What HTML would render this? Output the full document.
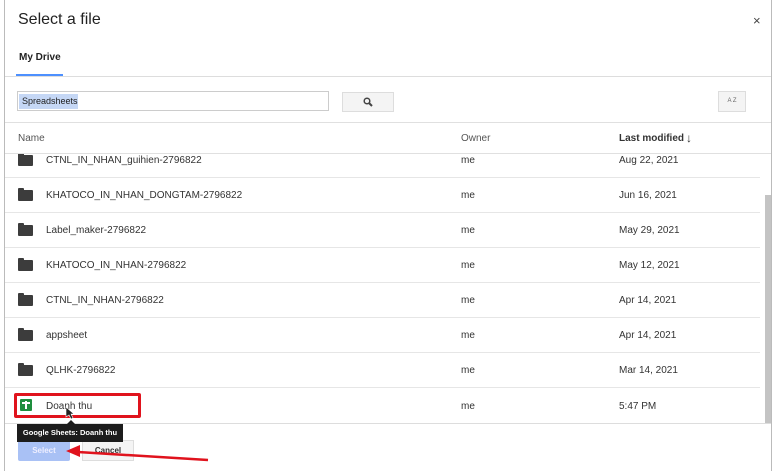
<!DOCTYPE html><html><head><style>
body{margin:0;width:773px;height:471px;background:#fff;font-family:"Liberation Sans",sans-serif;position:relative;overflow:hidden;color:#222}
.a{position:absolute}
.row{position:absolute;left:5px;width:755px;height:35px;border-bottom:1px solid #e6e6e6;font-size:10px;color:#333;overflow:hidden}
.row .ic{position:absolute;left:13px;top:13px;width:15px;height:11px;background:#3c3c3c;border-radius:1px}
.row .ic:before{content:"";position:absolute;left:0;top:-2px;width:6px;height:3px;background:#3c3c3c;border-radius:1px 1px 0 0}
.row .n{position:absolute;left:41px;top:13px}
.row .o{position:absolute;left:456px;top:13px}
.row .d{position:absolute;left:614px;top:13px}
</style></head><body>
<div class="a" style="left:4px;top:0;width:1px;height:471px;background:#bbb"></div>
<div class="a" style="left:771px;top:0;width:1px;height:471px;background:#bbb"></div>
<div class="a" style="left:18px;top:11px;font-size:16px;color:#222">Select a file</div>
<div class="a" style="left:753px;top:13px;font-size:13px;color:#444">×</div>
<div class="a" style="left:19px;top:52px;font-size:10px;font-weight:bold;color:#222">My Drive</div>
<div class="a" style="left:16px;top:74px;width:47px;height:2px;background:#4d90fe"></div>
<div class="a" style="left:5px;top:76px;width:766px;height:1px;background:#ddd"></div>
<div class="a" style="left:17px;top:91px;width:312px;height:20px;border:1px solid #ccc;box-sizing:border-box"></div>
<div class="a" style="left:19px;top:94px;width:59px;height:15px;background:#c5d7f5;font-size:9px;line-height:15px;padding-left:3px;box-sizing:border-box;color:#222">Spreadsheets</div>
<div class="a" style="left:342px;top:92px;width:52px;height:20px;background:#f4f4f4;border:1px solid #ddd;box-sizing:border-box;text-align:center"><svg width="10" height="10" viewBox="0 0 10 10" style="margin-top:4px"><circle cx="4" cy="4" r="2.8" fill="none" stroke="#444" stroke-width="1.5"/><path d="M6 6l3 3" stroke="#444" stroke-width="2"/></svg></div>
<div class="a" style="left:718px;top:91px;width:28px;height:21px;background:#f4f4f4;border:1px solid #ddd;box-sizing:border-box;font-size:6px;text-align:center;line-height:19px;color:#666">A Z</div>
<div class="a" style="left:5px;top:122px;width:766px;height:1px;background:#e0e0e0"></div>
<div class="a" style="left:18px;top:133px;font-size:10px;color:#555">Name</div>
<div class="a" style="left:461px;top:133px;font-size:10px;color:#555">Owner</div>
<div class="a" style="left:619px;top:133px;font-size:10px;font-weight:bold;color:#333">Last modified</div>
<div class="a" style="left:686px;top:131px;font-size:12px;font-weight:bold;color:#333">↓</div>
<div class="a" style="left:5px;top:153px;width:766px;height:1px;background:#e0e0e0"></div>
<div class="row" style="top:154px;height:23px"><div class="ic" style="top:1px"></div><div class="n" style="top:1px">CTNL_IN_NHAN_guihien-2796822</div><div class="o" style="top:1px">me</div><div class="d" style="top:1px">Aug 22, 2021</div></div>
<div class="row" style="top:177px"><div class="ic"></div><div class="n">KHATOCO_IN_NHAN_DONGTAM-2796822</div><div class="o">me</div><div class="d">Jun 16, 2021</div></div>
<div class="row" style="top:212px"><div class="ic"></div><div class="n">Label_maker-2796822</div><div class="o">me</div><div class="d">May 29, 2021</div></div>
<div class="row" style="top:247px"><div class="ic"></div><div class="n">KHATOCO_IN_NHAN-2796822</div><div class="o">me</div><div class="d">May 12, 2021</div></div>
<div class="row" style="top:282px"><div class="ic"></div><div class="n">CTNL_IN_NHAN-2796822</div><div class="o">me</div><div class="d">Apr 14, 2021</div></div>
<div class="row" style="top:317px"><div class="ic"></div><div class="n">appsheet</div><div class="o">me</div><div class="d">Apr 14, 2021</div></div>
<div class="row" style="top:352px"><div class="ic"></div><div class="n">QLHK-2796822</div><div class="o">me</div><div class="d">Mar 14, 2021</div></div>
<div class="row" style="top:388px;border:none"><div class="n">Doanh thu</div><div class="o">me</div><div class="d">5:47 PM</div></div>
<div class="a" style="left:20px;top:399px;width:12px;height:12px;background:#1e8e3e;border-radius:1px"><div class="a" style="left:5px;top:2px;width:2px;height:8px;background:#fff"></div><div class="a" style="left:2px;top:3px;width:8px;height:2px;background:#fff"></div></div>
<div class="a" style="left:14px;top:393px;width:127px;height:25px;border:3px solid #e0131d;box-sizing:border-box;border-radius:2px"></div>
<div class="a" style="left:765px;top:195px;width:6px;height:229px;background:#c4c4c4"></div>
<div class="a" style="left:5px;top:423px;width:766px;height:1px;background:#ddd"></div>
<div class="a" style="left:18px;top:440px;width:52px;height:21px;background:#a9c1f5;color:#eef;font-size:8px;font-weight:bold;text-align:center;line-height:21px;border-radius:2px">Select</div>
<div class="a" style="left:82px;top:440px;width:52px;height:21px;background:#f4f4f4;border:1px solid #ddd;box-sizing:border-box;font-size:8px;font-weight:bold;text-align:center;line-height:19px;color:#333">Cancel</div>
<div class="a" style="left:17px;top:424px;width:106px;height:18px;background:#1c1c1c;color:#fff;font-size:7.5px;font-weight:bold;line-height:18px;text-align:center">Google Sheets: Doanh thu</div>
<div class="a" style="left:67px;top:420px;width:0;height:0;border:4px solid transparent;border-bottom-color:#1c1c1c;border-top:none"></div>
<svg class="a" style="left:0;top:0" width="773" height="471"><path d="M208 460L78 452" stroke="#e0131d" stroke-width="2.5"/><path d="M66 451l14-6v12z" fill="#e0131d"/><path d="M66 407l0 10 3-2 2 4 2-1-2-4 3 0z" fill="#222" stroke="#fff" stroke-width=".6"/></svg>
</body></html>
